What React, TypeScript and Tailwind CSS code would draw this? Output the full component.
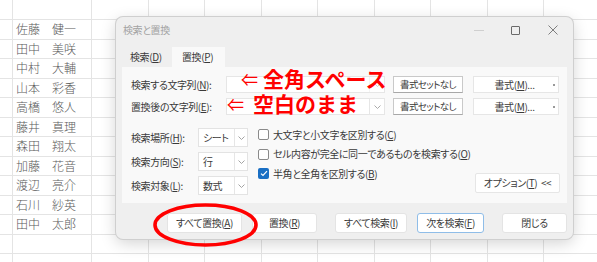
import React from "react";

const FONT = "font-['Noto_Sans_CJK_JP','Noto_Sans',sans-serif]";

const COLS = [13, 79, 56.5, 56.5, 56.5, 56.5, 56.5, 56.5, 56.5, 56.5, 56.5];
const NAMES: [string, string][] = [
  ["佐藤", "健一"],
  ["田中", "美咲"],
  ["中村", "大輔"],
  ["山本", "彩香"],
  ["高橋", "悠人"],
  ["藤井", "真理"],
  ["森田", "翔太"],
  ["加藤", "花音"],
  ["渡辺", "亮介"],
  ["石川", "紗英"],
  ["田中", "太郎"],
];

function Sheet() {
  const rows = Array.from({ length: 14 }, (_, i) => i);
  return (
    <div className="flex flex-col">
      {rows.map((r) => {
        const name = r >= 1 && r <= 11 ? NAMES[r - 1] : null;
        return (
          <div
            key={r}
            className={`flex border-b border-[#e4e4e4] ${r === 0 ? "h-[20px]" : "h-[19.5px]"}`}
          >
            {COLS.map((w, c) => (
              <div
                key={c}
                style={{ width: w }}
                className="shrink-0 border-r border-[#e4e4e4] flex items-center"
              >
                {c === 1 && name ? (
                  <span className="pl-[3px] text-[12px] font-light text-[#5a5a5a] leading-none whitespace-nowrap">
                    {name[0]}
                    {"\u3000"}
                    {name[1]}
                  </span>
                ) : null}
              </div>
            ))}
          </div>
        );
      })}
    </div>
  );
}

function Chevron({ color = "#9a9a9a" }: { color?: string }) {
  return (
    <svg width="7" height="4" viewBox="0 0 7 4">
      <path d="M0.5 0.5 L3.5 3.5 L6.5 0.5" fill="none" stroke={color} strokeWidth="0.9" />
    </svg>
  );
}

function Combo({ faint = false }: { faint?: boolean }) {
  return (
    <div className="w-[159px] h-[17px] bg-white border border-[#e6e6e6] flex items-stretch">
      <div className="flex-1" />
      <div
        className={`w-[15px] flex items-center justify-center border-l ${faint ? "border-[#f4f4f4]" : "border-[#e6e6e6]"}`}
      >
        <Chevron color={faint ? "#cccccc" : "#a0a0a0"} />
      </div>
    </div>
  );
}

function Select({ text }: { text: string }) {
  return (
    <div className="w-[50px] h-[19px] bg-white border border-[#e3e3e3] flex items-stretch">
      <div className="flex-1 flex items-center pl-[4px] leading-none">{text}</div>
      <div className="w-[13px] border-l border-[#e6e6e6] flex items-center justify-center">
        <Chevron />
      </div>
    </div>
  );
}

function Checkbox({ checked = false }: { checked?: boolean }) {
  return checked ? (
    <div className="w-[11px] h-[11px] rounded-[2px] bg-[#1a6fc4] flex items-center justify-center shrink-0">
      <svg width="8" height="7" viewBox="0 0 8 7">
        <path d="M1 3.6 L3 5.5 L7 1.2" fill="none" stroke="white" strokeWidth="1.2" />
      </svg>
    </div>
  ) : (
    <div className="w-[11px] h-[11px] rounded-[2px] bg-white border border-[#8a8a8a] shrink-0" />
  );
}

function Btn({
  w,
  children,
  primary = false,
}: {
  w: string;
  children: React.ReactNode;
  primary?: boolean;
}) {
  return (
    <div
      className={`${w} h-[20px] shrink-0 rounded-[3px] bg-white border flex items-center justify-center leading-none whitespace-nowrap ${
        primary ? "border-[#8fbde8]" : "border-[#e4e4e4]"
      }`}
    >
      {children}
    </div>
  );
}

function FormatButtons() {
  return (
    <>
      <div className="ml-[8px] w-[70px] h-[17px] bg-white border border-[#c9c9c9] border-b-[#a8a8a8] flex items-center justify-center whitespace-nowrap text-[9.5px] tracking-[-0.6px]">
        書式セットなし
      </div>
      <div className="ml-[10px] w-[86px] h-[17px] bg-white border border-[#e6e6e6] flex items-center">
        <span className="flex-1 text-center whitespace-nowrap pl-[2px]">
          書式(<u>M</u>)...
        </span>
        <span className="w-[2px] h-[2px] rounded-full bg-[#777] mr-[3px]" />
      </div>
    </>
  );
}

function Dialog() {
  return (
    <div
      className={`absolute left-[116px] top-[17px] w-[457px] h-[222px] rounded-[7px] bg-[#efefef] ring-1 ring-[#cfcfcf] shadow-[0_4px_16px_rgba(0,0,0,0.18)] flex flex-col text-[10px] tracking-[-0.4px] text-[#3a3a3a] [font-feature-settings:'palt'] ${FONT}`}
    >
      {/* title bar */}
      <div className="h-[30px] flex items-center pb-[4px] pl-[7px]">
        <span className="text-[10px] text-[#a3a3a3] leading-none">検索と置換</span>
        <div className="ml-auto flex items-center">
          <div className="w-[10px] h-[1px] bg-[#cfcfcf]" />
          <div className="ml-[27px] w-[9px] h-[9px] border border-[#6a6a6a] rounded-[1px]" />
          <svg className="ml-[28px] mr-[15px]" width="10" height="10" viewBox="0 0 10 10">
            <path d="M0.5 0.5 L9.5 9.5 M9.5 0.5 L0.5 9.5" stroke="#707070" strokeWidth="0.9" />
          </svg>
        </div>
      </div>
      {/* tabs */}
      <div className="h-[20px] flex pl-[6px] leading-none">
        <div className="w-[50px] pl-[8px] flex items-center">
          検索(<u>D</u>)
        </div>
        <div className="w-[53px] pl-[10px] bg-[#f9f9f9] flex items-center">
          置換(<u>P</u>)
        </div>
      </div>
      {/* panel */}
      <div className="mx-[6px] h-[136px] bg-[#f9f9f9] pt-[9px] pl-[9px] pr-[7px] flex flex-col leading-none">
        <div className="flex items-center h-[17px]">
          <div className="w-[95px] shrink-0 whitespace-nowrap">
            検索する文字列(<u>N</u>):
          </div>
          <Combo faint />
          <FormatButtons />
        </div>
        <div className="flex items-center h-[17px] mt-[5px]">
          <div className="w-[95px] shrink-0 whitespace-nowrap">
            置換後の文字列(<u>E</u>):
          </div>
          <Combo />
          <FormatButtons />
        </div>
        <div className="flex mt-[10px] h-[70px]">
          <div className="flex flex-col pt-[3px] gap-[5px]">
            {[
              ["検索場所", "H", "シート"],
              ["検索方向", "S", "行"],
              ["検索対象", "L", "数式"],
            ].map(([l, k, v]) => (
              <div key={k} className="flex items-center h-[19px]">
                <div className="w-[67px] whitespace-nowrap">
                  {l}(<u>{k}</u>):
                </div>
                <Select text={v} />
              </div>
            ))}
          </div>
          <div className="ml-[10px] flex-1 flex flex-col">
            <div className="h-[19.5px] flex items-center gap-[4px] whitespace-nowrap">
              <Checkbox />
              <span>大文字と小文字を区別する(<u>C</u>)</span>
            </div>
            <div className="h-[19.5px] flex items-center gap-[4px] whitespace-nowrap">
              <Checkbox />
              <span>セル内容が完全に同一であるものを検索する(<u>O</u>)</span>
            </div>
            <div className="h-[19.5px] flex items-center gap-[4px] whitespace-nowrap">
              <Checkbox checked />
              <span>半角と全角を区別する(<u>B</u>)</span>
            </div>
          </div>
          <div className="flex flex-col justify-end pb-[2px]">
            <div className="w-[85px] h-[20px] bg-white border border-[#e6e6e6] rounded-[2px] flex items-center justify-center whitespace-nowrap text-[10px] tracking-[-0.4px]">
              オプション(<u>T</u>)&nbsp;&nbsp;&lt;&lt;
            </div>
          </div>
        </div>
      </div>
      {/* bottom buttons */}
      <div className="flex mt-[10px] pl-[51px]">
        <Btn w="w-[75px]">
          すべて置換(<u>A</u>)
        </Btn>
        <div className="w-[10px]" />
        <Btn w="w-[65px]">
          置換(<u>R</u>)
        </Btn>
        <div className="w-[18px]" />
        <Btn w="w-[72px]">
          すべて検索(<u>I</u>)
        </Btn>
        <div className="w-[10px]" />
        <Btn w="w-[67px]" primary>
          次を検索(<u>F</u>)
        </Btn>
        <div className="w-[18px]" />
        <Btn w="w-[65px]">閉じる</Btn>
      </div>
    </div>
  );
}

export default function App() {
  return (
    <div className={`relative w-[597px] h-[262px] overflow-hidden bg-white ${FONT}`}>
      <Sheet />
      <Dialog />
      {/* annotations */}
      <div className="absolute left-[241px] top-[68px] flex items-center text-[#ff0000] font-bold leading-none whitespace-nowrap">
        <span className="text-[17px] font-normal">⇐</span>
        <span className="ml-[5px] text-[21px]">全角スペース</span>
      </div>
      <div className="absolute left-[227px] top-[93px] flex items-center text-[#ff0000] font-bold leading-none whitespace-nowrap">
        <span className="text-[17px] font-normal">⇐</span>
        <span className="ml-[9px] text-[21px]">空白のまま</span>
      </div>
      <svg className="absolute left-[150px] top-[200px]" width="112" height="50" viewBox="0 0 112 50">
        <ellipse cx="55.5" cy="25" rx="50.5" ry="20" fill="none" stroke="#ff0000" strokeWidth="3.6" />
      </svg>
    </div>
  );
}
